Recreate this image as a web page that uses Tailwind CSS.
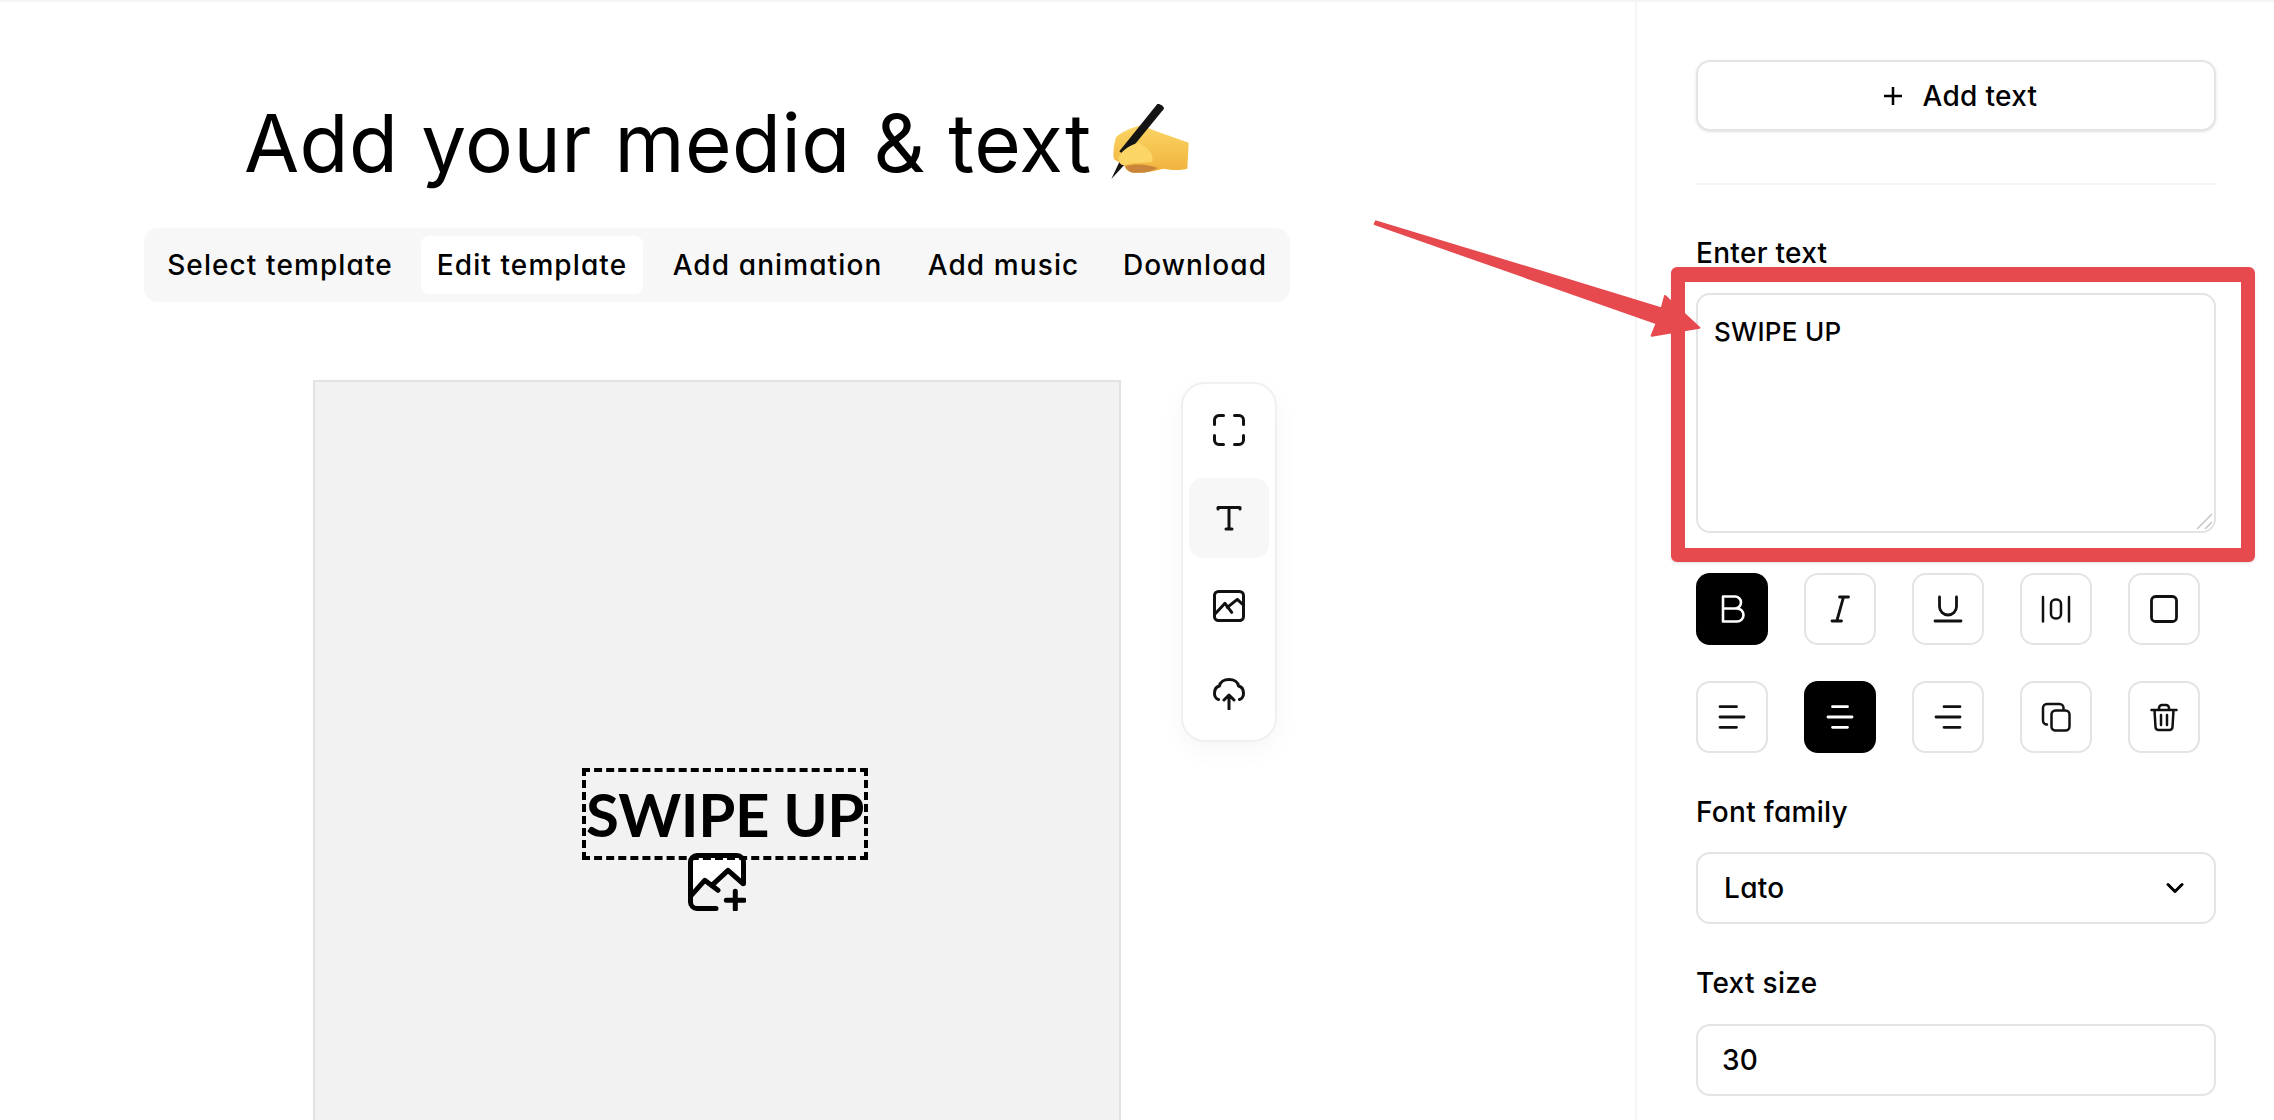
<!DOCTYPE html>
<html lang="en">
<head>
    <meta charset="UTF-8">
    <title>Edit template</title>
    <script src="https://cdn.jsdelivr.net/npm/@tailwindcss/browser@4"></script>
</head>
<body class="font-[Inter] [font-feature-settings:'cv11'] bg-white text-black">
    <div class="relative flex h-screen overflow-hidden border-t-2 border-[#f5f5f5]">
        <!-- Main column -->
        <main class="w-[1635px] shrink-0 pl-[144px]">
            <h1 class="flex items-start h-[226px] pl-[100px] pt-[81px] text-[80px] leading-[120px] font-normal tracking-[0.4px] whitespace-nowrap">
                <span>Add your media &amp; text</span>
                <!-- writing hand emoji -->
                <svg class="ml-[6px] mt-[17px]" width="110" height="100" viewBox="0 0 330 300">
                    <defs>
                        <linearGradient id="hand" x1="0" y1="0" x2="0" y2="1">
                            <stop offset="0" stop-color="#fbd565"/>
                            <stop offset="1" stop-color="#f0b23c"/>
                        </linearGradient>
                    </defs>
                    <path d="M78 196C84 214 100 220 118 218C140 220 170 212 196 206C225 212 252 210 268 206L272 128L165 90L130 75C100 84 70 95 54 112C48 135 44 160 48 178Z" fill="url(#hand)"/>
                    <path d="M82 198C88 214 100 220 116 218C138 220 160 214 180 204C150 192 110 190 82 198Z" fill="#c9853a"/>
                    <path d="M178 12C186 10 198 18 198 26L82 168L64 154Z" fill="#141414"/>
                    <path d="M64 186L78 196L40 237Z" fill="#141414"/>
                    <path d="M62 172C72 150 95 135 122 128C150 140 170 165 162 186C140 190 110 186 78 196C68 196 60 186 62 172Z" fill="#fbd565"/>
                </svg>
            </h1>

            <!-- Steps -->
            <nav class="flex gap-[13px] w-[1146px] h-[74px] p-2 rounded-[14px] bg-[#f7f7f7] text-[28px] font-medium tracking-[1.1px] whitespace-nowrap">
                <a href="#" class="flex items-center justify-center w-[256px] rounded-lg">Select template</a>
                <a href="#" class="flex items-center justify-center w-[222px] rounded-lg bg-white">Edit template</a>
                <a href="#" class="flex items-center justify-center w-[243px] rounded-lg">Add animation</a>
                <a href="#" class="flex items-center justify-center w-[183px] rounded-lg">Add music</a>
                <a href="#" class="flex items-center justify-center w-[174px] rounded-lg">Download</a>
            </nav>

            <div class="flex items-start mt-[78px] ml-[169px]">
                <!-- Canvas -->
                <div class="relative shrink-0 w-[808px] h-[808px] bg-[#f2f2f2] border-2 border-[#e2e2e2]">
                    <svg class="absolute left-[373px] top-[471px]" width="58" height="58" viewBox="0 0 58 58" fill="none" stroke="black" stroke-width="5" stroke-linecap="round" stroke-linejoin="round">
                        <path d="M3 40L16.7 27.3L30 37.3L40 17.3L55 30V8a6 6 0 0 0-6-6H9a6 6 0 0 0-6 6Z" fill="white" stroke="none"/>
                        <path d="M28 55.5H9a6.500 6.500 0 0 1-6.500-6.500V9A6.500 6.500 0 0 1 9 2.500H49A6.500 6.500 0 0 1 55.500 9V30.500"/>
                        <path d="M3.300 42.300L16.700 27.300L30 37.300M25 31.300L40 17.300L55 30.700"/>
                        <path d="M47.300 38.300V56.300M38.300 47.300H56.300"/>
                    </svg>
                    <div class="absolute left-[267px] top-[386px] flex items-center justify-center w-[286px] h-[92px] border-4 border-dashed border-black font-[Lato] [font-feature-settings:normal] font-bold text-[60px] tracking-[-0.4px] leading-none whitespace-nowrap">SWIPE UP</div>
                </div>

                <!-- Tool rail -->
                <div class="flex flex-col gap-2 shrink-0 ml-[60px] mt-[2px] p-[6px] rounded-[24px] border-2 border-[#f0f0f0] bg-white shadow-[0_8px_24px_rgba(0,0,0,0.04)]">
                    <button class="flex items-center justify-center w-20 h-20 rounded-[14px]">
                        <svg width="32" height="32" viewBox="0 0 32 32" fill="none" stroke="#111" stroke-width="3" stroke-linecap="round" stroke-linejoin="round"><path d="M1.500 10.500V6A4.500 4.500 0 0 1 6 1.500H10.500M21.500 1.500H26A4.500 4.500 0 0 1 30.500 6V10.500M30.500 21.500V26A4.500 4.500 0 0 1 26 30.500H21.500M10.500 30.500H6A4.500 4.500 0 0 1 1.500 26V21.500"/></svg>
                    </button>
                    <button class="flex items-center justify-center w-20 h-20 rounded-[14px] bg-[#f7f7f7]">
                        <svg width="32" height="32" viewBox="0 0 32 32" fill="none" stroke="#111" stroke-width="3" stroke-linecap="round" stroke-linejoin="round"><path d="M5 7V5.500H27V7M16 5.500V27M13 27H19"/></svg>
                    </button>
                    <button class="flex items-center justify-center w-20 h-20 rounded-[14px]">
                        <svg width="32" height="32" viewBox="0 0 32 32" fill="none" stroke="#111" stroke-width="3" stroke-linecap="round" stroke-linejoin="round"><rect x="1.500" y="1.500" width="29" height="29" rx="4"/><path d="M2.700 23.300L12 13.300L18.700 22.300M14.300 17.300L24.300 9.300L30.300 15"/></svg>
                    </button>
                    <button class="flex items-center justify-center w-20 h-20 rounded-[14px]">
                        <svg width="32" height="32" viewBox="0 0 32 32" fill="none" stroke="#111" stroke-width="3" stroke-linecap="round" stroke-linejoin="round"><path d="M5.500 21.500C3 21 1.500 18 1.500 15.500C1.500 11 4 8.500 6.500 8C7 4 11 1.500 16 1.500C21 1.500 25 4 25.500 8C28 8.500 30.500 11 30.500 15.500C30.500 18 29 21 26.500 21.500M16 31V17M11 22L16 17L21 22"/></svg>
                    </button>
                </div>
            </div>
        </main>

        <!-- Settings panel -->
        <aside class="flex-1 pl-[59px] pt-[58px] border-l-2 border-[#f5f5f5] text-[28px] tracking-[0.3px]">
            <div class="w-[520px]">
                <button class="flex items-center justify-center gap-[20px] w-full h-[71px] pl-[8px] rounded-[14px] border-2 border-[#e4e4e7] shadow-sm font-medium">
                    <svg width="20" height="20" viewBox="0 0 20 20" fill="none" stroke="black" stroke-width="2.500"><path d="M10 1V19M1 10H19"/></svg>
                    Add text
                </button>
                <div class="mt-[52px] h-[2px] bg-[#f5f5f5]"></div>

                <label class="block mt-[48px] mb-5 leading-10 font-medium">Enter text</label>
                <div class="relative">
                    <textarea class="block w-full h-[240px] pt-[17px] px-[16px] rounded-[14px] border-2 border-[#e4e4e7] text-[26px] tracking-[0.3px] font-medium leading-10 outline-none resize-none">SWIPE UP</textarea>
                    <!-- resize grip -->
                    <svg class="absolute right-[4px] bottom-[4px]" width="16" height="16" viewBox="0 0 16 16" fill="none" stroke="#c4c4c4" stroke-width="1.500"><path d="M1 16L16 1M9 16L16 9"/></svg>
                </div>

                <!-- Format buttons -->
                <div class="grid grid-cols-5 gap-x-9 gap-y-9 w-[504px] mt-[40px]">
                    <button class="flex items-center justify-center w-[72px] h-[72px] rounded-[14px] bg-black">
                        <svg width="32" height="32" viewBox="0 0 32 32" fill="none" stroke="white" stroke-width="2.600" stroke-linejoin="round"><path d="M7 15.500V3.500H19A6 6 0 0 1 19 15.500H7V28.500H21A6.500 6.500 0 0 0 21 15.500H19"/></svg>
                    </button>
                    <button class="flex items-center justify-center w-[72px] h-[72px] rounded-[14px] border-2 border-[#e4e4e4]">
                        <svg width="32" height="32" viewBox="0 0 32 32" fill="none" stroke="#111" stroke-width="2.800" stroke-linecap="round"><path d="M15.500 4H24.500M8 28H17.500M19.500 4L12.800 28"/></svg>
                    </button>
                    <button class="flex items-center justify-center w-[72px] h-[72px] rounded-[14px] border-2 border-[#e4e4e4]">
                        <svg width="32" height="32" viewBox="0 0 32 32" fill="none" stroke="#111" stroke-width="2.800" stroke-linecap="round"><path d="M7.500 4V13.500A8.500 8.500 0 0 0 24.500 13.500V4M3 28H29"/></svg>
                    </button>
                    <button class="flex items-center justify-center w-[72px] h-[72px] rounded-[14px] border-2 border-[#e4e4e4]">
                        <svg width="32" height="32" viewBox="0 0 32 32" fill="none" stroke="#111" stroke-width="2.500" stroke-linecap="round"><path d="M3 4V28.500M29 4V28.500"/><rect x="11" y="6.500" width="10" height="19" rx="4.500"/></svg>
                    </button>
                    <button class="flex items-center justify-center w-[72px] h-[72px] rounded-[14px] border-2 border-[#e4e4e4]">
                        <svg width="32" height="32" viewBox="0 0 32 32" fill="none" stroke="#111" stroke-width="2.800"><rect x="3.500" y="3.500" width="25" height="25" rx="4"/></svg>
                    </button>
                    <button class="flex items-center justify-center w-[72px] h-[72px] rounded-[14px] border-2 border-[#e4e4e4]">
                        <svg width="32" height="32" viewBox="0 0 32 32" fill="none" stroke="#111" stroke-width="2.800" stroke-linecap="round"><path d="M4 5.700H20.500M4 16H28M4 26.300H20.500"/></svg>
                    </button>
                    <button class="flex items-center justify-center w-[72px] h-[72px] rounded-[14px] bg-black">
                        <svg width="32" height="32" viewBox="0 0 32 32" fill="none" stroke="white" stroke-width="2.800" stroke-linecap="round"><path d="M8.500 5.700H23.500M4 16H28M8.500 26.300H23.500"/></svg>
                    </button>
                    <button class="flex items-center justify-center w-[72px] h-[72px] rounded-[14px] border-2 border-[#e4e4e4]">
                        <svg width="32" height="32" viewBox="0 0 32 32" fill="none" stroke="#111" stroke-width="2.800" stroke-linecap="round"><path d="M12 5.700H28M4 16H28M12 26.300H28"/></svg>
                    </button>
                    <button class="flex items-center justify-center w-[72px] h-[72px] rounded-[14px] border-2 border-[#e4e4e4]">
                        <svg width="32" height="32" viewBox="0 0 32 32" fill="none" stroke="#111" stroke-width="2.500" stroke-linecap="round" stroke-linejoin="round"><path d="M23.500 8V7A4 4 0 0 0 19.500 3H7A4 4 0 0 0 3 7V19.500A4 4 0 0 0 7 23.500"/><rect x="11.500" y="9.500" width="18" height="20" rx="4"/></svg>
                    </button>
                    <button class="flex items-center justify-center w-[72px] h-[72px] rounded-[14px] border-2 border-[#e4e4e4]">
                        <svg width="32" height="32" viewBox="0 0 32 32" fill="none" stroke="#111" stroke-width="2.500" stroke-linecap="round" stroke-linejoin="round"><path d="M3.500 9H28.500M11 9V7A3 3 0 0 1 14 4H18A3 3 0 0 1 21 7V9M6.500 9L7.500 26A3 3 0 0 0 10.500 29H21.500A3 3 0 0 0 24.500 26L25.500 9M13 14V24M19 14V24"/></svg>
                    </button>
                </div>

                <label class="block mt-[39px] mb-5 leading-10 font-medium">Font family</label>
                <div class="flex items-center justify-between h-[72px] pl-[26px] pr-[30px] rounded-[14px] border-2 border-[#e4e4e7] font-medium">
                    <span>Lato</span>
                    <svg width="18" height="12" viewBox="0 0 18 12" fill="none" stroke="black" stroke-width="3" stroke-linecap="round" stroke-linejoin="round"><path d="M2 2.500L9 9.500L16 2.500"/></svg>
                </div>

                <label class="block mt-[39px] mb-[21px] leading-10 font-medium">Text size</label>
                <div class="flex items-center h-[72px] pl-[24px] rounded-[14px] border-2 border-[#e4e4e7] font-medium">30</div>
            </div>
        </aside>

        <!-- Annotation over the page -->
        <div class="absolute left-[1671px] top-[265px] w-[584px] h-[295px] border-[14px] border-t-[15px] border-[#e64a4f] rounded-[6px] shadow-sm pointer-events-none"></div>
        <svg class="absolute left-[1360px] top-[198px] pointer-events-none" width="360" height="160" viewBox="0 0 1080 480">
            <polygon points="48,64 905,325 915,288 1018,383 875,407 890,370 44,72" fill="#e64a4f" stroke="#e64a4f" stroke-width="6" stroke-linejoin="round"/>
        </svg>
    </div>
</body>
</html>
